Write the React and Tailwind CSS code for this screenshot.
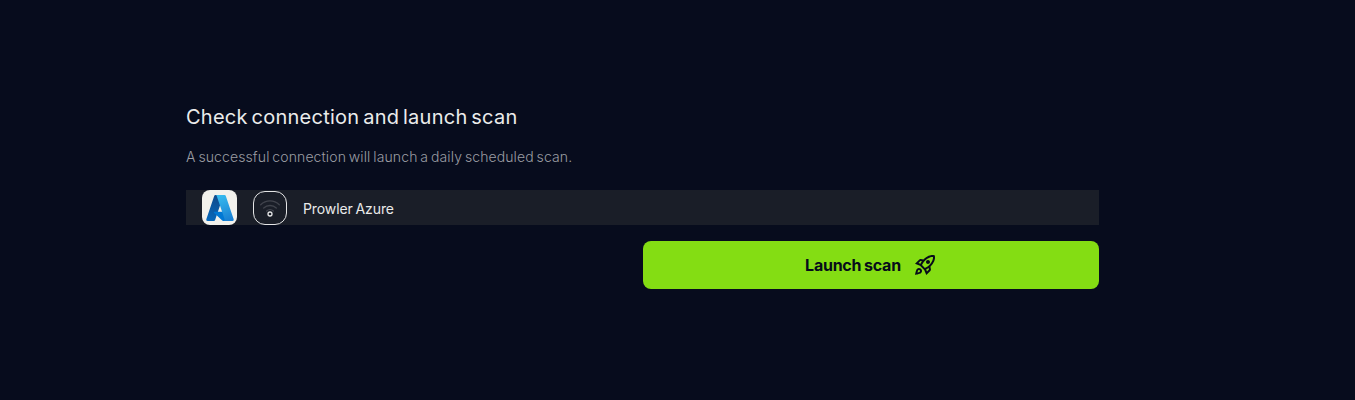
import { MdOutlineRocketLaunch } from "react-icons/md";

function AzureLogo() {
  return (
    <svg viewBox="0 0 96 96" className="h-[30px] w-[30px]" aria-hidden="true">
      <defs>
        <linearGradient id="azLeft" x1="46" y1="12" x2="19" y2="92" gradientUnits="userSpaceOnUse">
          <stop offset="0" stopColor="#114a8b" />
          <stop offset="1" stopColor="#0669bc" />
        </linearGradient>
        <linearGradient id="azRight" x1="46" y1="10" x2="76" y2="89" gradientUnits="userSpaceOnUse">
          <stop offset="0" stopColor="#35b9ee" />
          <stop offset="1" stopColor="#187fd2" />
        </linearGradient>
      </defs>
      <path fill="url(#azLeft)" d="M33.338 6.544h26.038l-27.03 80.087a4.152 4.152 0 0 1-3.933 2.824H8.149a4.145 4.145 0 0 1-3.928-5.47L29.404 9.368a4.152 4.152 0 0 1 3.934-2.825z" />
      <path fill="#0078d4" d="M71.175 60.261h-41.29a1.911 1.911 0 0 0-1.305 3.309l26.532 24.764a4.171 4.171 0 0 0 2.846 1.121h23.38z" />
      <path fill="url(#azRight)" d="M66.595 9.364a4.145 4.145 0 0 0-3.928-2.82H33.648a4.146 4.146 0 0 1 3.928 2.82l25.184 74.62a4.146 4.146 0 0 1-3.928 5.472h29.02a4.146 4.146 0 0 0 3.927-5.472z" />
    </svg>
  );
}

function ConnectionIcon() {
  return (
    <svg viewBox="0 0 24 24" fill="none" className="h-6 w-6" aria-hidden="true">
      <g stroke="#41444d" strokeWidth="1.3" strokeLinecap="round">
        <path d="M2.7 8.7a13.4 13.4 0 0 1 18.6 0" />
        <path d="M5.7 12a9.2 9.2 0 0 1 12.6 0" />
        <path d="M8.6 15a5 5 0 0 1 6.8 0" />
      </g>
      <circle cx="12" cy="18" r="2" stroke="#e4e5e6" strokeWidth="1.3" />
    </svg>
  );
}

export default function App() {
  return (
    <main className="h-[400px] w-full bg-[#070c1d] pl-[186px] pt-[103px] font-['Inter',sans-serif]">
      <section className="flex w-[913px] flex-col">
        <h1 className="text-[20px] leading-7 font-normal tracking-[0.24px] [word-spacing:-2px] whitespace-nowrap text-[#ebecec]">
          Check connection and launch scan
        </h1>
        <p className="mt-4 text-[14px] leading-5 font-light tracking-[0.11px] [word-spacing:-1.2px] whitespace-nowrap text-[#9b9da3]">
          A successful connection will launch a daily scheduled scan.
        </p>
        <div className="mt-[23px] flex h-[35px] items-center gap-4 bg-[#1a1e28] pl-4">
          <div className="flex h-[35px] w-[35px] items-center justify-center rounded-lg bg-[#f2f1ec]">
            <AzureLogo />
          </div>
          <div className="flex h-[34px] w-[34px] items-center justify-center rounded-xl border border-[#e4e5e6]">
            <ConnectionIcon />
          </div>
          <span className="pt-[2px] text-[14px] leading-5 tracking-[-0.1px] [word-spacing:-1px] whitespace-nowrap text-[#e9eaea]">
            Prowler Azure
          </span>
        </div>
        <button className="mt-4 flex h-12 w-[456px] items-center justify-center gap-3 self-end rounded-lg bg-[#84dd13] text-[16px] leading-6 font-bold text-[#070c1a]">
          <span className="tracking-[-0.25px] [word-spacing:-0.7px] whitespace-nowrap">Launch scan</span>
          <MdOutlineRocketLaunch size={24} />
        </button>
      </section>
    </main>
  );
}
